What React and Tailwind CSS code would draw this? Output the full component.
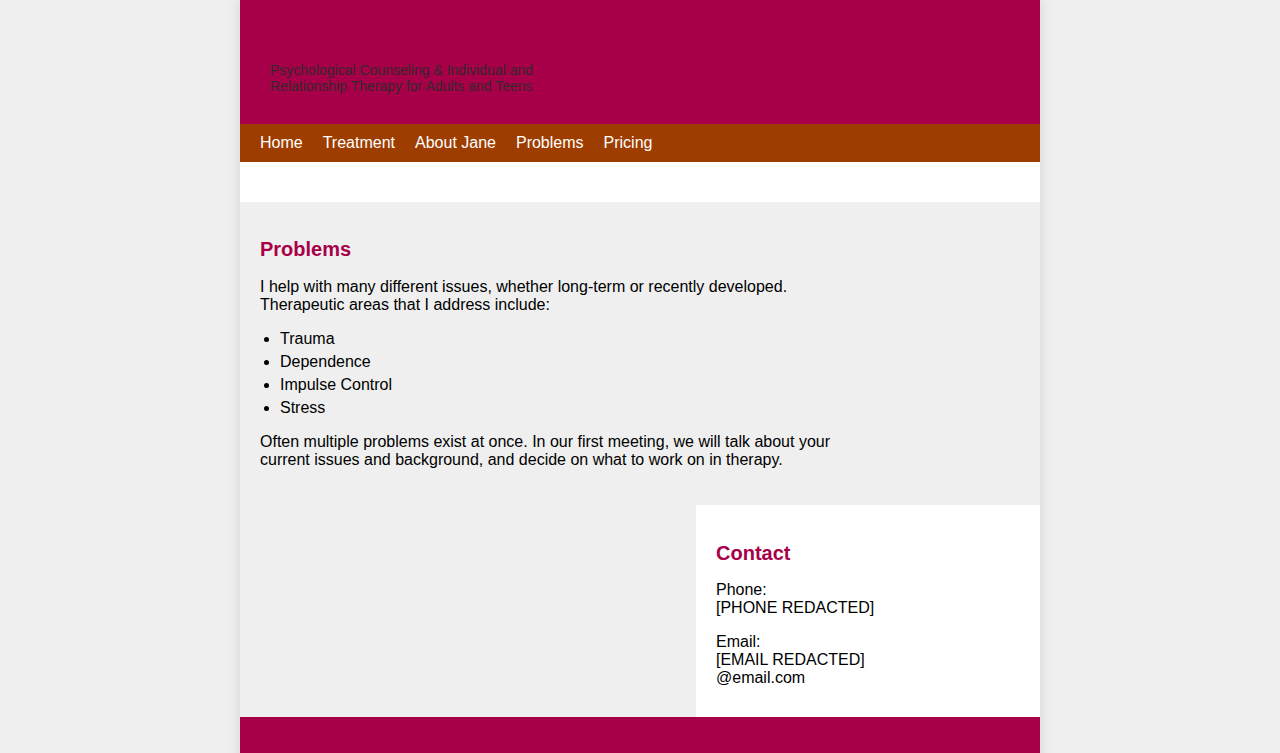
export default function App() {
  const navItems = ['Home', 'Treatment', 'About Jane', 'Problems', 'Pricing'];
  const areas = ['Trauma', 'Dependence', 'Impulse Control', 'Stress'];

  return (
    <div className="min-h-screen bg-[#efefef] font-['Liberation_Sans',Arial,sans-serif] text-black">
      <div className="mx-auto w-[800px] bg-[#efefef] shadow-[0_0_12px_rgba(0,0,0,0.12)]">
        {/* Header */}
        <header className="h-[124px] bg-[#a80048] pl-[30px] pt-[62px]">
          <p className="w-[300px] text-[14px] leading-[16px] text-[#33282d]">
            Psychological Counseling &amp; Individual and Relationship Therapy for Adults and Teens
          </p>
        </header>

        {/* Nav */}
        <nav className="flex h-[38px] items-center gap-5 bg-[#9e3d00] px-5 text-[16px] text-white">
          {navItems.map((item) => (
            <a key={item} href="#" className="leading-[18px]">
              {item}
            </a>
          ))}
        </nav>

        <div className="h-10 bg-white" />

        {/* Main content */}
        <main className="w-[620px] px-5 pt-[36px] pb-[36px]">
          <h2 className="text-[20px] font-bold leading-[23px] text-[#a80048]">Problems</h2>
          <p className="mt-[17px] w-[580px] text-[16px] leading-[18px]">
            I help with many different issues, whether long-term or recently developed. Therapeutic areas that I address include:
          </p>
          <ul className="mt-[13px] list-disc pl-5 text-[16px] leading-[23px]">
            {areas.map((a) => (
              <li key={a}>{a}</li>
            ))}
          </ul>
          <p className="mt-[14px] w-[600px] text-[16px] leading-[18px]">
            Often multiple problems exist at once. In our first meeting, we will talk about your current issues and background, and decide on what to work on in therapy.
          </p>
        </main>

        {/* Contact */}
        <div className="flex justify-end">
          <aside className="w-[344px] bg-white px-5 pt-[37px] pb-[30px] text-[16px] leading-[18px]">
            <h2 className="text-[20px] font-bold leading-[23px] text-[#a80048]">Contact</h2>
            <p className="mt-4">
              Phone:
              <br />
              [PHONE REDACTED]
            </p>
            <p className="mt-4">
              Email:
              <br />
              [EMAIL REDACTED]
              <br />
              @email.com
            </p>
          </aside>
        </div>

        {/* Footer */}
        <footer className="h-[60px] bg-[#a80048]" />
      </div>
    </div>
  );
}
